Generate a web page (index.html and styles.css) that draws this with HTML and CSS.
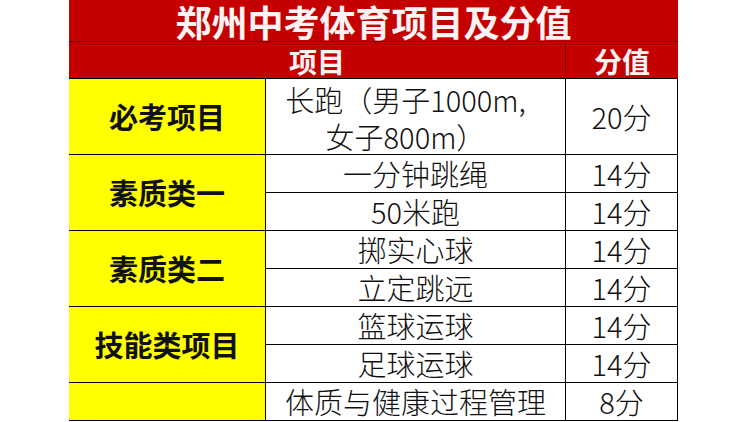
FILE: index.html
```html
<!DOCTYPE html>
<html lang="zh-CN">
<head>
<meta charset="utf-8">
<title>郑州中考体育项目及分值</title>
<link rel="stylesheet" href="styles.css">
</head>
<body>
<div class="sheet">
  <div class="title">郑州中考体育项目及分值</div>
  <div class="head">
    <div class="hcell hitem">项目</div>
    <div class="hcell hscore">分值</div>
  </div>
  <div class="grid">
    <div class="cat r1">必考项目</div>
    <div class="item r1"><span class="two">长跑（男子1000m,<br>女子800m）</span></div>
    <div class="score r1">20分</div>

    <div class="cat r2">素质类一</div>
    <div class="item">一分钟跳绳</div>
    <div class="score">14分</div>
    <div class="item">50米跑</div>
    <div class="score">14分</div>

    <div class="cat r4">素质类二</div>
    <div class="item">掷实心球</div>
    <div class="score">14分</div>
    <div class="item">立定跳远</div>
    <div class="score">14分</div>

    <div class="cat r6">技能类项目</div>
    <div class="item">篮球运球</div>
    <div class="score">14分</div>
    <div class="item">足球运球</div>
    <div class="score">14分</div>

    <div class="cat r8"></div>
    <div class="item">体质与健康过程管理</div>
    <div class="score">8分</div>
  </div>
</div>
</body>
</html>
```

FILE: styles.css
```css
html, body {
  margin: 0;
  padding: 0;
  background: #ffffff;
}

body {
  font-family: "Noto Sans CJK SC", "Noto Sans", sans-serif;
  color: #111;
}

.sheet {
  width: 609px;
  margin-left: 69px;
}

.title {
  display: flex;
  align-items: center;
  justify-content: center;
  height: 41px;
  border-bottom: 1px solid #6e0000;
  background: #c40000;
  color: #fff4f4;
  font-size: 36px;
  font-weight: bold;
  line-height: 1;
}

.head {
  display: grid;
  grid-template-columns: 496px 1px 112px;
  height: 36px;
  background: #c40000;
}

.hcell {
  display: flex;
  align-items: center;
  justify-content: center;
  color: #fff4f4;
  font-size: 28px;
  font-weight: bold;
  line-height: 1;
  padding-top: 2px;
}

.hitem {
  grid-column: 1;
}

.hscore {
  grid-column: 3;
  border-left: 1px solid #7a0000;
  margin-left: -1px;
}

.grid {
  display: grid;
  grid-template-columns: 196px 299px 111px;
  grid-template-rows: 75px repeat(7, 37px);
  gap: 1px;
  padding: 1px 1px 1px 0;
  background: #000;
}

.grid > div {
  display: flex;
  align-items: center;
  justify-content: center;
  font-size: 29px;
  line-height: 1;
  white-space: nowrap;
}

.cat {
  grid-column: 1;
  background: #ffff00;
  font-weight: bold;
  color: #111;
}

.r1 { grid-row: 1; }
.r2 { grid-row: 2 / span 2; }
.r4 { grid-row: 4 / span 2; }
.r6 { grid-row: 6 / span 2; }
.r8 { grid-row: 8; }

.item {
  grid-column: 2;
  background: #fff;
  font-weight: 300;
}

.score {
  grid-column: 3;
  background: #fff;
  font-weight: 300;
}

.two {
  display: block;
  text-align: center;
  line-height: 37px;
  padding-right: 20px;
  padding-top: 3px;
}
```
